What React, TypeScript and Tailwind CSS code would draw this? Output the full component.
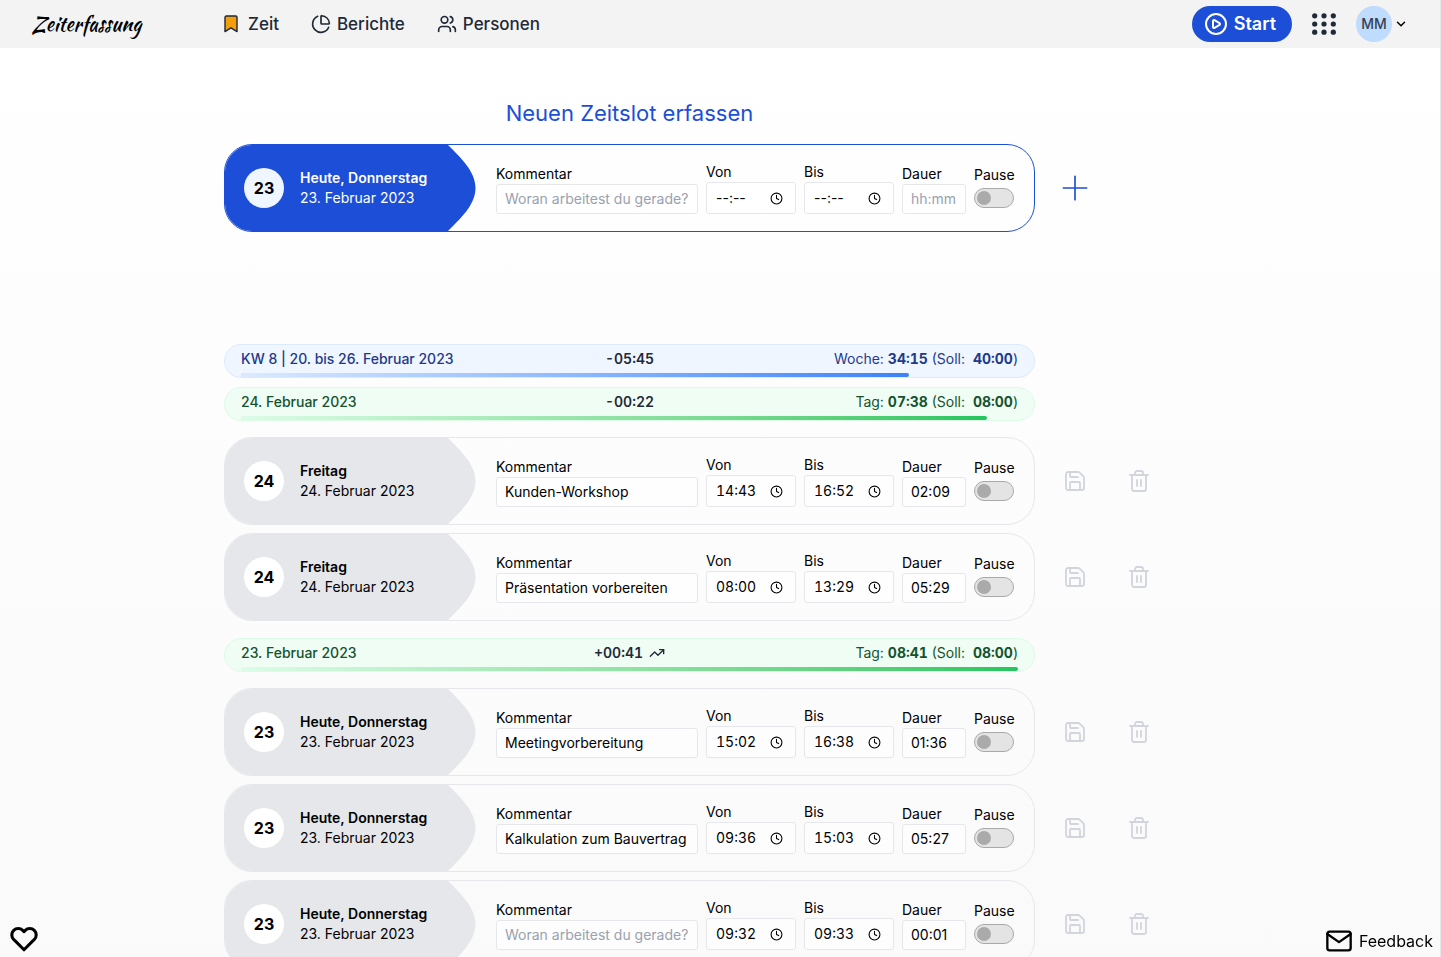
import { useId, useState } from 'react';
import { ChevronDown, CirclePlay, Clock, PieChart, Plus, Save, Trash2, TrendingUp, Users } from 'lucide-react';
import { FiHeart, FiMail } from 'react-icons/fi';
import clsx from 'clsx';

interface TimeSlot {
  id: number;
  day: string;
  weekday: string;
  date: string;
  comment: string;
  from: string;
  to: string;
  duration: string;
}

interface SummaryBarProps {
  label: string;
  delta: string;
  kind: string;
  actual: string;
  target: string;
  percent: number;
  tone: 'blue' | 'green';
  isOver?: boolean;
}

const emptySlot: TimeSlot = {
  id: 0,
  day: '23',
  weekday: 'Heute, Donnerstag',
  date: '23. Februar 2023',
  comment: '',
  from: '',
  to: '',
  duration: '',
};

const fridaySlots: TimeSlot[] = [
  { id: 1, day: '24', weekday: 'Freitag', date: '24. Februar 2023', comment: 'Kunden-Workshop', from: '14:43', to: '16:52', duration: '02:09' },
  { id: 2, day: '24', weekday: 'Freitag', date: '24. Februar 2023', comment: 'Präsentation vorbereiten', from: '08:00', to: '13:29', duration: '05:29' },
];

const thursdaySlots: TimeSlot[] = [
  { id: 3, day: '23', weekday: 'Heute, Donnerstag', date: '23. Februar 2023', comment: 'Meetingvorbereitung', from: '15:02', to: '16:38', duration: '01:36' },
  { id: 4, day: '23', weekday: 'Heute, Donnerstag', date: '23. Februar 2023', comment: 'Kalkulation zum Bauvertrag', from: '09:36', to: '15:03', duration: '05:27' },
  { id: 5, day: '23', weekday: 'Heute, Donnerstag', date: '23. Februar 2023', comment: '', from: '09:32', to: '09:33', duration: '00:01' },
];

function BookmarkIcon() {
  return (
    <svg width="14" height="18" viewBox="0 0 14 18" aria-hidden="true">
      <path
        d="M1 2.3A1.3 1.3 0 0 1 2.3 1h9.4A1.3 1.3 0 0 1 13 2.3V16.6L7 12.8L1 16.6Z"
        className="fill-[#f59e0b] stroke-[#1f2937]"
        strokeWidth="1.4"
        strokeLinejoin="round"
      />
    </svg>
  );
}

function DotsIcon() {
  return (
    <svg width="24" height="24" viewBox="0 0 24 24" fill="currentColor" aria-hidden="true">
      {[3.8, 12, 20.2].map((y) => [2.7, 12, 21.3].map((x) => <circle key={`${x}-${y}`} cx={x} cy={y} r="2.6" />))}
    </svg>
  );
}

function Header() {
  return (
    <header className="flex h-12 shrink-0 items-center bg-[#f3f3f3] px-8 text-[#1f2937]">
      <a href="#" className="w-48 shrink-0 font-['Kaushan_Script','Liberation_Serif',serif] text-xl text-black">
        Zeiterfassung
      </a>
      <nav className="flex items-center gap-8 text-[17px] leading-7 font-medium">
        <a href="#zeit" className="flex items-center gap-2.5">
          <BookmarkIcon />
          Zeit
        </a>
        <a href="#berichte" className="flex items-center gap-1.5">
          <PieChart size={20} />
          Berichte
        </a>
        <a href="#personen" className="flex items-center gap-1.5">
          <Users size={20} />
          Personen
        </a>
      </nav>
      <div className="ml-auto flex items-center">
        <button className="flex h-9 items-center gap-1.5 rounded-full bg-[#1d4ed8] pr-4 pl-3 text-lg font-semibold text-white">
          <CirclePlay size={24} />
          Start
        </button>
        <button aria-label="Apps" className="ml-5">
          <DotsIcon />
        </button>
        <button className="ml-5 flex items-center gap-0.5">
          <span className="flex size-9 items-center justify-center rounded-full bg-[#bfdbfe] text-sm font-medium text-gray-700">
            MM
          </span>
          <ChevronDown size={14} strokeWidth={2.5} className="text-black" />
        </button>
      </div>
    </header>
  );
}

function TimeField({ label, value }: { label: string; value: string }) {
  const id = useId();
  return (
    <div className="flex w-[90px] shrink-0 flex-col">
      <label htmlFor={id}>{label}</label>
      <div className="flex h-8 items-center rounded-[3px] border border-gray-200 bg-white/50 pr-3 pl-[9px]">
        <input
          id={id}
          type="text"
          placeholder="--:--"
          defaultValue={value}
          className="w-full min-w-0 bg-transparent tabular-nums outline-none placeholder:text-black placeholder-shown:normal-nums"
        />
        <Clock size={13} strokeWidth={2} className="shrink-0" />
      </div>
    </div>
  );
}

function SlotCard({ slot, isNew = false }: { slot: TimeSlot; isNew?: boolean }) {
  const id = useId();
  const [isPause, setIsPause] = useState(false);

  return (
    <div
      className={clsx(
        'flex h-[88px] min-w-0 items-stretch overflow-hidden rounded-[28px] border text-sm',
        isNew ? 'border-[#1d4ed8]' : 'border-gray-200'
      )}
    >
      <div
        className={clsx(
          'flex w-[223px] shrink-0 items-center gap-4 pl-[19px]',
          isNew ? 'bg-[#1d4ed8] text-white' : 'bg-gray-200 text-black'
        )}
      >
        <span
          className={clsx(
            'flex size-10 items-center justify-center rounded-full text-base font-bold text-black',
            isNew ? 'bg-[#eff6ff]' : 'bg-white'
          )}
        >
          {slot.day}
        </span>
        <div>
          <p className="font-semibold">{slot.weekday}</p>
          <p>{slot.date}</p>
        </div>
      </div>
      <svg
        viewBox="0 0 28 86"
        preserveAspectRatio="none"
        className={clsx('h-full w-7 shrink-0', isNew ? 'fill-[#1d4ed8]' : 'fill-gray-200')}
        aria-hidden="true"
      >
        <path d="M0 0C12 12 27.5 26 27.5 43S12 74 0 86Z" />
      </svg>
      <div className="flex min-w-0 flex-1 items-center px-5">
        <div className="flex min-w-0 flex-1 items-end gap-2 text-black">
          <div className="flex min-w-0 flex-1 flex-col">
            <label htmlFor={`${id}-comment`}>Kommentar</label>
            <input
              id={`${id}-comment`}
              type="text"
              placeholder="Woran arbeitest du gerade?"
              defaultValue={slot.comment}
              className="h-[30px] w-full rounded-[3px] border border-gray-200 bg-white/50 px-2 pb-0.5 placeholder:text-gray-400"
            />
          </div>
          <TimeField label="Von" value={slot.from} />
          <TimeField label="Bis" value={slot.to} />
          <div className="flex w-16 shrink-0 flex-col">
            <label htmlFor={`${id}-duration`}>Dauer</label>
            <input
              id={`${id}-duration`}
              type="text"
              placeholder="hh:mm"
              defaultValue={slot.duration}
              className="h-[30px] w-full rounded-[3px] border border-gray-200 bg-white/50 px-2 pb-0.5 placeholder:text-gray-400"
            />
          </div>
          <div className="flex w-10 shrink-0 flex-col gap-[3px] pb-1.5">
            <label htmlFor={`${id}-pause`}>Pause</label>
            <input
              id={`${id}-pause`}
              type="checkbox"
              role="switch"
              checked={isPause}
              onChange={(e) => setIsPause(e.target.checked)}
              className="flex h-5 w-10 appearance-none items-center rounded-full border border-[#a9a9a9] bg-[#e4e4e4] px-0.5 before:size-3.5 before:rounded-full before:bg-[#aaaaaa] checked:justify-end checked:bg-[#bfdbfe]"
            />
          </div>
        </div>
      </div>
    </div>
  );
}

function SlotRow({ slot, isNew = false }: { slot: TimeSlot; isNew?: boolean }) {
  return (
    <li className="grid grid-cols-[minmax(0,1fr)_128px] items-center gap-2">
      <SlotCard slot={slot} isNew={isNew} />
      <div className="grid grid-cols-2 justify-items-center text-gray-300">
        {isNew ? (
          <button aria-label="Zeitslot hinzufügen" className="text-[#1d4ed8]">
            <Plus size={40} strokeWidth={1} />
          </button>
        ) : (
          <>
            <button aria-label="Speichern">
              <Save size={24} strokeWidth={1.8} />
            </button>
            <button aria-label="Löschen">
              <Trash2 size={24} strokeWidth={1.8} />
            </button>
          </>
        )}
      </div>
    </li>
  );
}

function SummaryBar({ label, delta, kind, actual, target, percent, tone, isOver = false }: SummaryBarProps) {
  return (
    <div
      className={clsx(
        'mr-[136px] rounded-full border px-4 pt-1 text-sm',
        tone === 'blue' ? 'border-[#dbeafe] bg-[#eff6ff] text-[#1e3a8a]' : 'border-[#dcfce7] bg-[#f0fdf4] text-[#14532d]'
      )}
    >
      <div className="grid grid-cols-[1fr_auto_1fr]">
        <span className="font-medium">{label}</span>
        <span className="flex items-center gap-1.5 font-semibold text-[#1f2937] tabular-nums">
          {delta}
          {isOver && <TrendingUp size={16} />}
        </span>
        <span className="text-right whitespace-pre">
          {kind}: <b className="font-bold tabular-nums">{actual}</b> (Soll:{'  '}
          <b className="font-bold tabular-nums">{target}</b>)
        </span>
      </div>
      <div
        className={clsx(
          'mt-1 h-1 rounded-r-sm bg-linear-to-r',
          tone === 'blue' ? 'from-[#dbeafe] to-[#3b82f6]' : 'from-[#dcfce7] to-[#22c55e]'
        )}
        style={{ width: `${percent}%` }}
      />
    </div>
  );
}

export default function App() {
  return (
    <div className="flex h-screen flex-col border-r border-gray-200 bg-linear-to-b from-white to-[#fafafa] font-['Inter',sans-serif] text-black">
      <Header />
      <main className="min-h-0 flex-1 overflow-y-auto pl-56 [scrollbar-width:none]">
        <div className="max-w-[947px] pt-12 pb-16">
          <h1 className="mr-[136px] mb-3.5 text-center text-[22px] leading-[34px] text-[#1d4ed8]">Neuen Zeitslot erfassen</h1>
          <ul>
            <SlotRow slot={emptySlot} isNew />
          </ul>

          <section className="mt-28">
            <SummaryBar label="KW 8 | 20. bis 26. Februar 2023" delta="-05:45" kind="Woche" actual="34:15" target="40:00" percent={86} tone="blue" />
            <div className="mt-[9px]">
              <SummaryBar label="24. Februar 2023" delta="-00:22" kind="Tag" actual="07:38" target="08:00" percent={96} tone="green" />
              <ul className="mt-4 flex flex-col gap-2">
                {fridaySlots.map((slot) => (
                  <SlotRow key={slot.id} slot={slot} />
                ))}
              </ul>
            </div>
            <div className="mt-[17px]">
              <SummaryBar label="23. Februar 2023" delta="+00:41" kind="Tag" actual="08:41" target="08:00" percent={100} tone="green" isOver />
              <ul className="mt-4 flex flex-col gap-2">
                {thursdaySlots.map((slot) => (
                  <SlotRow key={slot.id} slot={slot} />
                ))}
              </ul>
            </div>
          </section>
        </div>
      </main>

      <button aria-label="Gefällt mir" className="fixed bottom-1 left-2.5">
        <FiHeart size={28} strokeWidth={2.6} />
      </button>
      <a href="#feedback" className="fixed right-2 bottom-0.5 flex items-center gap-1.5">
        <FiMail size={28} />
        Feedback
      </a>
    </div>
  );
}
